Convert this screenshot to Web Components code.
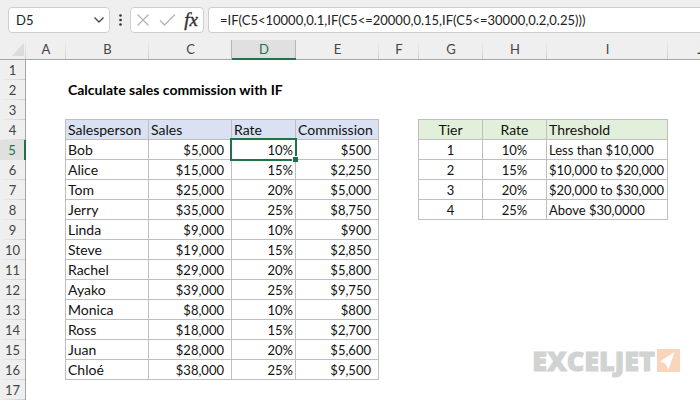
<!DOCTYPE html>
<html lang="en">
<head>
<meta charset="utf-8">
<title>Calculate sales commission with IF</title>
<style>
    body {
        margin: 0;
        background-color: #efefef;
        font-family: Lato, "Liberation Sans", sans-serif;
        font-size: 13px;
        color: #111;
    }
</style>
</head>
<body>
<sheet-toolbar>
    <name-box slot="name" value="D5"></name-box>
    <formula-bar value="=IF(C5&lt;10000,0.1,IF(C5&lt;=20000,0.15,IF(C5&lt;=30000,0.2,0.25)))"></formula-bar>
</sheet-toolbar>
<sheet-grid selected="D5">
    <brand-mark slot="overlay">EXCELJET</brand-mark>
</sheet-grid>

<script>
const templates = {
    toolbar: document.createElement('template'),
    name: document.createElement('template'),
    formula: document.createElement('template'),
    grid: document.createElement('template'),
    brand: document.createElement('template'),
};

templates.toolbar.innerHTML = `
<style>
    :host {
        display: flex;
        align-items: center;
        height: 26px;
        padding: 7px 0;
        overflow: hidden;
    }
    .dots {
        width: 3px;
        height: 12px;
        margin: 0 8px 0 9px;
        fill: #333;
    }
    .actions {
        display: flex;
        align-items: center;
        justify-content: space-around;
        box-sizing: border-box;
        width: 74px;
        height: 26px;
        margin-right: 4px;
        background-color: white;
        border: 1px solid #cfcfcf;
        border-radius: 4px;
    }
    button {
        display: flex;
        align-items: center;
        justify-content: center;
        width: 24px;
        height: 24px;
        padding: 0;
        border: 0;
        background-color: transparent;
    }
    button svg {
        fill: none;
        stroke: #b5b5b5;
        stroke-width: 1.3;
    }
    .fx {
        font: italic 19px/20px "Liberation Serif", serif;
        -webkit-text-stroke: .4px #333;
        color: #333;
    }
    slot:not([name]) {
        display: flex;
        flex: 1;
    }
    ::slotted(formula-bar) {
        flex: 1;
    }
</style>
<slot name="name"></slot>
<svg class="dots" viewBox="0 0 3 12"><circle cx="1.500" cy="1.500" r="1.300"/><circle cx="1.500" cy="6" r="1.300"/><circle cx="1.500" cy="10.500" r="1.300"/></svg>
<div class="actions">
    <button aria-label="Cancel"><svg width="14" height="14" viewBox="0 0 14 14"><path d="M1.500 1.500 12.500 12.500M12.500 1.500 1.500 12.500"/></svg></button>
    <button aria-label="Enter"><svg width="17" height="14" viewBox="0 0 17 14"><path d="M1 7.500 5.500 12 16 1.500"/></svg></button>
    <button class="fx" aria-label="Insert function">fx</button>
</div>
<slot></slot>
`

templates.name.innerHTML = `
<style>
    :host {
        display: flex;
        align-items: center;
        box-sizing: border-box;
        width: 102px;
        height: 26px;
        margin-left: 8px;
        background-color: white;
        border: 1px solid #cfcfcf;
        border-radius: 4px;
    }
    input {
        flex: 1;
        min-width: 0;
        padding: 0 0 0 7px;
        border: 0;
        outline: none;
        background-color: transparent;
        font: inherit;
        color: #222;
    }
    button {
        display: flex;
        align-items: center;
        justify-content: center;
        width: 16px;
        height: 20px;
        margin-right: 2px;
        padding: 0;
        border: 0;
        background-color: transparent;
    }
    svg {
        fill: none;
        stroke: #444;
        stroke-width: 1.3;
    }
</style>
<input aria-label="Name box">
<button aria-label="Show names"><svg width="10" height="6" viewBox="0 0 10 6"><path d="M.5.5 5 5 9.500.5"/></svg></button>
`

templates.formula.innerHTML = `
<style>
    :host {
        display: flex;
        box-sizing: border-box;
        height: 26px;
        background-color: white;
        border: 1px solid #cfcfcf;
        border-right: 0;
        border-radius: 4px 0 0 4px;
    }
    input {
        flex: 1;
        min-width: 0;
        padding: 0 0 0 11px;
        border: 0;
        outline: none;
        background-color: transparent;
        font: inherit;
        color: #222;
    }
</style>
<input aria-label="Formula">
`

templates.grid.innerHTML = `
<style>
    :host {
        --line: #bfbfbf;
        --green: #217346;
        display: block;
        position: relative;
        overflow: hidden;
    }
    table {
        width: 100%;
        table-layout: fixed;
        border-collapse: separate;
        border-spacing: 0;
        background-color: white;
    }
    th, td {
        box-sizing: border-box;
        height: 20px;
        padding: 0 2px;
        line-height: 19px;
        white-space: nowrap;
        text-align: left;
        font-weight: normal;
    }
    td {
        padding-top: 2px;
        line-height: 17px;
    }
    thead th {
        text-align: center;
        color: #444;
        background: linear-gradient(#efefef, #cfcfcf) right / 1px 100% no-repeat #efefef;
        border-bottom: 1px solid #a6a6a6;
    }
    tbody th {
        text-align: center;
        color: #444;
        background: linear-gradient(90deg, #efefef, #cfcfcf) bottom / 100% 1px no-repeat #efefef;
        border-right: 1px solid #a6a6a6;
    }
    thead th.on {
        line-height: 18px;
        color: var(--green);
        background: #e0e0e0;
        border-bottom: 2px solid var(--green);
        box-shadow: inset -1px 0 #b5b5b5, -1px 0 #b5b5b5;
    }
    tbody th.on {
        color: var(--green);
        background: #e0e0e0;
        border-right: 2px solid var(--green);
    }
    .corner svg {
        display: block;
        margin-left: 8px;
        fill: #dcdcdc;
    }
    .label {
        padding-top: 0;
        font-size: 14px;
        line-height: 18px;
    }
    .title {
        font-weight: bold;
        color: black;
    }
    .boxed {
        border-right: 1px solid var(--line);
        border-bottom: 1px solid var(--line);
        box-shadow: -1px 0 var(--line), 0 -1px var(--line), -1px -1px var(--line);
    }
    .blue {
        background-color: #d9e1f2;
    }
    .green {
        background-color: #e2efda;
    }
    .money {
        text-align: right;
        padding-right: 7px;
    }
    .percent {
        text-align: right;
    }
    .center {
        text-align: center;
    }
    .selected {
        position: relative;
    }
    .selected::before {
        content: "";
        position: absolute;
        inset: -2px;
        border: 2px solid var(--green);
    }
    .selected::after {
        content: "";
        position: absolute;
        right: -3px;
        bottom: -3px;
        width: 5px;
        height: 5px;
        background-color: var(--green);
        border: 1px solid white;
        border-width: 1px 0 0 1px;
    }
</style>
<table>
    <colgroup></colgroup>
    <thead></thead>
    <tbody></tbody>
</table>
<slot name="overlay"></slot>
`

templates.brand.innerHTML = `
<style>
    :host {
        display: flex;
        align-items: center;
        gap: 2px;
        position: absolute;
        right: 20px;
        bottom: 28px;
        height: 23px;
        font: 800 27px/23px "Open Sans", sans-serif;
        -webkit-text-stroke: 1px #d1d3d3;
        color: #d1d3d3;
    }
</style>
<slot></slot>
<svg width="23" height="23" viewBox="0 0 23 23"><path fill="#fbd5bb" d="M0 0h23v23H0z"/><path fill="white" d="M17.500 3 3 12.500l5 2 3.500 6z"/></svg>
`

const columns = {A: 40, B: 83, C: 83, D: 64, E: 83, F: 40, G: 64, H: 64, I: 121, J: 64};
const row_count = 17;

const sales = [
    ['Bob', '$5,000', '10%', '$500'],
    ['Alice', '$15,000', '15%', '$2,250'],
    ['Tom', '$25,000', '20%', '$5,000'],
    ['Jerry', '$35,000', '25%', '$8,750'],
    ['Linda', '$9,000', '10%', '$900'],
    ['Steve', '$19,000', '15%', '$2,850'],
    ['Rachel', '$29,000', '20%', '$5,800'],
    ['Ayako', '$39,000', '25%', '$9,750'],
    ['Monica', '$8,000', '10%', '$800'],
    ['Ross', '$18,000', '15%', '$2,700'],
    ['Juan', '$28,000', '20%', '$5,600'],
    ['Chloé', '$38,000', '25%', '$9,500'],
];

const tiers = [
    ['1', '10%', 'Less than $10,000'],
    ['2', '15%', '$10,000 to $20,000'],
    ['3', '20%', '$20,000 to $30,000'],
    ['4', '25%', 'Above $30,0000'],
];

class BaseElement extends HTMLElement {
    constructor(template) {
        super();
        this.attachShadow({mode: 'open'}).append(template.content.cloneNode(true));
    }
}

class SheetToolbar extends BaseElement {
    constructor() {
        super(templates.toolbar);
    }
}

class BrandMark extends BaseElement {
    constructor() {
        super(templates.brand);
    }
}

class NameBox extends BaseElement {
    constructor() {
        super(templates.name);
    }

    connectedCallback() {
        this.shadowRoot.querySelector('input').value = this.getAttribute('value');
    }
}

class FormulaBar extends BaseElement {
    constructor() {
        super(templates.formula);
    }

    connectedCallback() {
        this.shadowRoot.querySelector('input').value = this.getAttribute('value');
    }
}

class SheetGrid extends BaseElement {
    #cells = {};

    constructor() {
        super(templates.grid);
        this.#cells.B2 = ['Calculate sales commission with IF', 'title label'];
        this.#fill('BCDE', 4, [['Salesperson', 'Sales', 'Rate', 'Commission']], Array(4).fill('label blue'));
        this.#fill('BCDE', 5, sales, ['label', 'money', 'percent', 'money']);
        this.#fill('GHI', 4, [['Tier', 'Rate', 'Threshold']], ['label green center', 'label green center', 'label green']);
        this.#fill('GHI', 5, tiers, ['center', 'center', '']);
    }

    connectedCallback() {
        this.#render();
    }

    #fill(letters, start, rows, classes) {
        rows.forEach((row, i) => {
            row.forEach((text, j) => {
                this.#cells[letters[j] + (start + i)] = [text, 'boxed ' + classes[j]];
            })
        })
    }

    #render() {
        const selected = this.getAttribute('selected');
        const letters = Object.keys(columns);

        let cols = '<col style="width: 26px">';
        let head = '<th class="corner"><svg width="14" height="13" viewBox="0 0 14 13"><path d="M14 0v13H2z"/></svg></th>';
        for (const letter of letters) {
            cols += `<col style="width: ${columns[letter]}px">`;
            head += `<th scope="col" class="${selected[0] === letter ? 'on' : ''}">${letter}</th>`;
        }
        // an unnamed last column takes what is left of a wide window
        cols += '<col>';
        head += '<th></th>';

        let body = '';
        for (let row = 1; row <= row_count; row++) {
            body += `<tr><th scope="row" class="${selected.slice(1) === String(row) ? 'on' : ''}">${row}</th>`;
            for (const letter of letters) {
                const key = letter + row;
                const [text, name] = this.#cells[key] || ['', ''];
                body += `<td class="${name}${key === selected ? ' selected' : ''}">${text}</td>`;
            }
            body += '<td></td></tr>';
        }

        this.shadowRoot.querySelector('colgroup').innerHTML = cols;
        this.shadowRoot.querySelector('thead').innerHTML = `<tr>${head}</tr>`;
        this.shadowRoot.querySelector('tbody').innerHTML = body;
    }
}

customElements.define('name-box', NameBox);
customElements.define('formula-bar', FormulaBar);
customElements.define('sheet-toolbar', SheetToolbar);
customElements.define('brand-mark', BrandMark);
customElements.define('sheet-grid', SheetGrid);
</script>
</body>
</html>
